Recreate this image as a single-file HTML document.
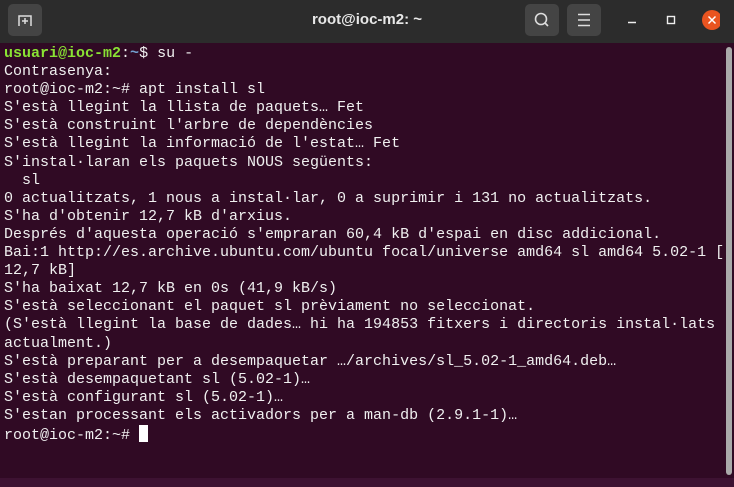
<!DOCTYPE html>
<html><head><meta charset="utf-8"><style>
html,body{margin:0;padding:0;width:734px;height:487px;overflow:hidden;background:#2c2c2c}
.hdr{position:absolute;left:0;top:0;width:734px;height:43px;background:#2c2c2c;}
.btn{position:absolute;top:4px;width:34px;height:32px;background:#444;border-radius:5px}
.title{position:absolute;left:0;width:734px;top:11px;text-align:center;color:#e8e8e8;font:bold 15px "Liberation Sans",sans-serif}
.term{position:absolute;left:0;top:43px;width:734px;height:435px;background:#300a24}
.bot{position:absolute;left:0;top:478px;width:734px;height:9px;background:#3d1232}
pre{margin:0;position:absolute;left:4px;top:2px;font:15px/18.1px "Liberation Mono",monospace;color:#f0f0f0;white-space:pre}
.g{color:#8ae234;font-weight:bold}.b{color:#729fcf;font-weight:bold}
.cur{display:inline-block;width:9px;height:17px;background:#fff;vertical-align:-3px}
.sb{position:absolute;left:726px;top:47px;width:6px;height:428px;background:#aaa;border-radius:3px}
</style></head><body>
<div class="hdr">
<div class="btn" style="left:8px"><svg width="34" height="32"><path d="M11 22V12h12v10M17 14v6M14 17h6" stroke="#ddd" stroke-width="1.5" fill="none"/></svg></div>
<div class="title">root@ioc-m2: ~</div>
<div class="btn" style="left:525px"><svg width="34" height="32"><circle cx="16" cy="15" r="5.5" stroke="#ddd" stroke-width="1.6" fill="none"/><path d="M20 19l3 3" stroke="#ddd" stroke-width="1.6"/></svg></div>
<div class="btn" style="left:567px"><svg width="34" height="32"><path d="M11 10.5h12M11 16h12M11 21.5h12" stroke="#ddd" stroke-width="1.4"/></svg></div>
<svg style="position:absolute;left:620px;top:10px" width="100" height="24"><path d="M8 12.5h8" stroke="#eee" stroke-width="1.5"/><rect x="47.5" y="6.5" width="7" height="7" stroke="#eee" stroke-width="1.4" fill="none"/><circle cx="92" cy="10" r="10" fill="#e95420"/><path d="M88.5 6.5l7 7M95.5 6.5l-7 7" stroke="#fff" stroke-width="1.5"/></svg>
</div>
<div class="term"><pre><span class="g">usuari@ioc-m2</span>:<span class="b">~</span>$ su -
Contrasenya:
root@ioc-m2:~# apt install sl
S'està llegint la llista de paquets… Fet
S'està construint l'arbre de dependències
S'està llegint la informació de l'estat… Fet
S'instal·laran els paquets NOUS següents:
  sl
0 actualitzats, 1 nous a instal·lar, 0 a suprimir i 131 no actualitzats.
S'ha d'obtenir 12,7 kB d'arxius.
Després d'aquesta operació s'empraran 60,4 kB d'espai en disc addicional.
Bai:1 http://es.archive.ubuntu.com/ubuntu focal/universe amd64 sl amd64 5.02-1 [
12,7 kB]
S'ha baixat 12,7 kB en 0s (41,9 kB/s)
S'està seleccionant el paquet sl prèviament no seleccionat.
(S'està llegint la base de dades… hi ha 194853 fitxers i directoris instal·lats
actualment.)
S'està preparant per a desempaquetar …/archives/sl_5.02-1_amd64.deb…
S'està desempaquetant sl (5.02-1)…
S'està configurant sl (5.02-1)…
S'estan processant els activadors per a man-db (2.9.1-1)…
root@ioc-m2:~# <span class="cur"></span></pre>
<div class="sb" style="top:4px"></div></div>
<div class="bot"></div>
</body></html>
